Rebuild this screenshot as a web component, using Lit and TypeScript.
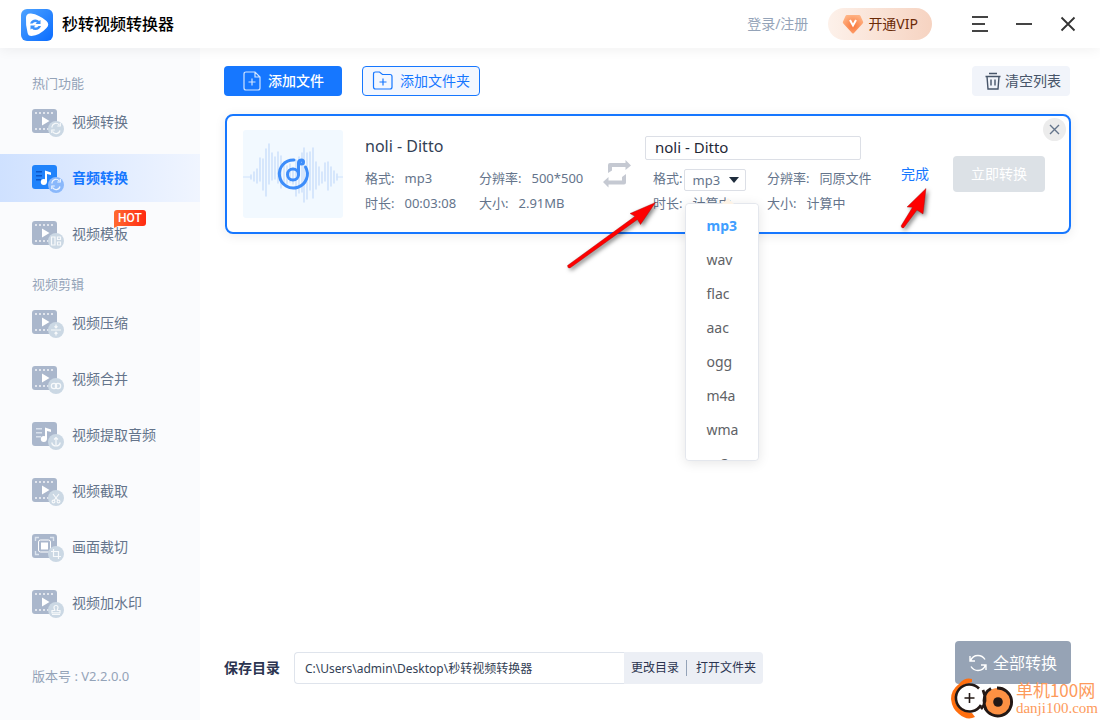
import { LitElement, html, css, svg, nothing, TemplateResult } from "lit";
import { customElement, property, state } from "lit/decorators.js";
import { classMap } from "lit/directives/class-map.js";

const base = css`
  :host {
    box-sizing: border-box;
    font-family: "Noto Sans", "Noto Sans CJK SC", sans-serif;
    font-size: 14px;
    line-height: 20px;
  }
  *, *::before, *::after { box-sizing: border-box; }
  button, input, select { font: inherit; margin: 0; padding: 0; border: 0; background: none; color: inherit; outline: none; }
  button { cursor: pointer; white-space: nowrap; }
  a { text-decoration: none; color: inherit; }
  svg { display: block; flex: none; }
`;

type Entry = { label: string; kind: "video" | "audio" | "frame"; mark: string; hot?: boolean };

const GROUPS: { title: string; entries: Entry[] }[] = [
  {
    title: "热门功能",
    entries: [
      { label: "视频转换", kind: "video", mark: "cycle" },
      { label: "音频转换", kind: "audio", mark: "cycle" },
      { label: "视频模板", kind: "video", mark: "template", hot: true },
    ],
  },
  {
    title: "视频剪辑",
    entries: [
      { label: "视频压缩", kind: "video", mark: "compress" },
      { label: "视频合并", kind: "video", mark: "merge" },
      { label: "视频提取音频", kind: "audio", mark: "extract" },
      { label: "视频截取", kind: "video", mark: "cut" },
      { label: "画面裁切", kind: "frame", mark: "crop" },
      { label: "视频加水印", kind: "video", mark: "stamp" },
    ],
  },
];

const MARKS: Record<string, TemplateResult> = {
  cycle: svg`<path d="M20 20.5v-1a4 4 0 0 1 7.200-1.500M28 23.500a4 4 0 0 1-7.400 1"/><path d="M28.300 16v3h-3M19.800 26v-3h3"/>`,
  template: svg`<path d="M19.500 18h3.500v8h-3.500zM25.500 18h3v2.500h-3zM25.500 23h3v3h-3z"/>`,
  compress: svg`<path d="M19 22h10M24 16.500v3M24 27.500v-3M22.500 18.300l1.500 1.500 1.500-1.500M22.500 25.700l1.500-1.500 1.500 1.500"/>`,
  merge: svg`<circle cx="22" cy="22" r="2.700"/><circle cx="26" cy="22" r="2.700"/>`,
  extract: svg`<path d="M24 25v-7M22 19.500l2-2 2 2M19.700 22.500a4.400 4.400 0 0 0 8.600 0"/>`,
  cut: svg`<path d="M21 18l5 6.500M27 18l-5 6.500"/><circle cx="21.500" cy="25.500" r="1.400"/><circle cx="26.500" cy="25.500" r="1.400"/>`,
  crop: svg`<path d="M21.500 17v7.500h7.500M19 19.500h7.500v7.500"/>`,
  stamp: svg`<path d="M22.800 22.500c0-1.200-.8-1.700-.8-3a2 2 0 0 1 4 0c0 1.300-.8 1.800-.8 3h2.800v2.300h-8v-2.300zM20 26.500h8"/>`,
};

function featureIcon(e: Entry, active: boolean) {
  const dots = [3, 7, 11, 15, 19].map((x) => svg`<rect x=${x} y="5" width="2" height="2"/><rect x=${x} y="21" width="2" height="2"/>`);
  const body =
    e.kind === "video"
      ? svg`<g fill="#fff" opacity=".65">${dots}</g><path d="M10 9.500v9l7.500-4.500z" fill="#fff"/>`
      : e.kind === "audio"
        ? svg`<g fill=${active ? "#0a55c9" : "#d9e1ec"}><rect x="4" y="8" width="6" height="1.500"/><rect x="4" y="12" width="6" height="1.500"/><rect x="4" y="16" width="5" height="1.500"/></g>
            <path d="M13 7.500l6 2v2.500l-4-1v8.500h-2z" fill="#fff"/><circle cx="11.800" cy="19" r="3" fill="#fff"/>`
        : svg`<rect x="6.500" y="8" width="12" height="12" rx="2" fill="none" stroke="#fff"/><rect x="9" y="10.500" width="7" height="7" fill="#fff"/>
            <path d="M3.500 9V5.500H7M18 5.500h3.500V9M3.500 19v3.500H7" fill="none" stroke="#dce4ee" stroke-width="1.400"/>`;
  return html`<svg width="32" height="30" viewBox="0 0 32 30" aria-hidden="true">
    <rect x="0" y="2" width="25" height="24" rx="3" fill=${active ? "#2083fb" : "#aab7cc"} />
    ${body}
    <circle cx="24" cy="22" r="8" fill=${active ? "#8ab8fb" : "#cbd8e4"} />
    <g fill="none" stroke="#fff" stroke-width="1.200" opacity=".85">${MARKS[e.mark]}</g>
  </svg>`;
}

@customElement("side-nav")
class SideNav extends LitElement {
  @property({ type: String }) current = "音频转换";
  static styles = [base, css`
    :host { display: flex; flex-direction: column; background: #fafbfd; padding: 21px 0 34px; }
    h2 { margin: 0 0 1px; padding-left: 32px; font-size: 13px; font-weight: 400; line-height: 28px; color: #94a3b8; }
    ul { list-style: none; margin: 0 0 12px; padding: 0; display: flex; flex-direction: column; gap: 8px; }
    .item { display: flex; align-items: center; gap: 8px; height: 48px; padding-left: 32px; color: #64748b; }
    .item.active { color: #1677ff; font-weight: 700; background: linear-gradient(90deg, #cfe1ff, #f0f5ff); }
    .label { position: relative; }
    .hot { position: absolute; left: 42px; top: -14px; width: 32px; height: 16px; border-radius: 3px 3px 3px 0; background: linear-gradient(90deg, #ff6a30, #ff2a10); color: #fff; font: 500 12px/16px Roboto, sans-serif; text-align: center; }
    .hot::after { content: ""; position: absolute; left: 0; top: 100%; border-top: 2px solid #ff6a30; border-right: 4px solid transparent; }
    .version { margin-top: auto; padding-left: 32px; font-size: 13px; color: #94a3b8; }
  `];
  render() {
    return html`
      ${GROUPS.map((g) => html`
        <h2>${g.title}</h2>
        <ul>
          ${g.entries.map((e) => {
            const active = e.label === this.current;
            return html`<li><a href="#" class=${classMap({ item: true, active })} @click=${(ev: Event) => { ev.preventDefault(); this.current = e.label; }}>
              ${featureIcon(e, active)}
              <span class="label">${e.label}${e.hot ? html`<span class="hot">HOT</span>` : nothing}</span>
            </a></li>`;
          })}
        </ul>`)}
      <div class="version">版本号 : V2.2.0.0</div>
    `;
  }
}

@customElement("title-bar")
class TitleBar extends LitElement {
  static styles = [base, css`
    :host { display: flex; align-items: center; height: 48px; padding: 0 20px; background: #fff; box-shadow: 0 2px 12px rgba(0, 0, 0, .06); position: relative; z-index: 1; }
    h1 { margin: 0 auto 0 8px; font-size: 16px; line-height: 24px; font-weight: 500; color: #000; }
    .login { color: #94a3b8; margin-right: 20px; }
    .vip { display: flex; align-items: center; gap: 4px; height: 32px; padding: 0 14px; border-radius: 16px; background: linear-gradient(90deg, #fdf1ea, #f6d3c1); color: #6b2a06; margin-right: 36px; }
    .windows { display: flex; gap: 20px; }
    .windows button { width: 24px; height: 24px; }
  `];
  render() {
    return html`
      <svg width="34" height="34" viewBox="0 0 34 34" aria-hidden="true">
        <defs><linearGradient id="lg" x1="0" y1="0" x2="1" y2="1"><stop offset="0" stop-color="#4ea3ff" /><stop offset="1" stop-color="#0a6cff" /></linearGradient></defs>
        <rect x="1" y="2" width="32" height="32" rx="6" fill="url(#lg)" />
        <path d="M6 11q0-5 5-4.500 8 1 15.500 7.500 3.500 3.500 0 7-7 7.500-15 8-3.500 0-4-3.500Q5.500 18 6 11z" fill="#fff" />
        <path d="M10 16.500q1.500-4 5.500-4 2.500 0 3.500 1.500l1.500-1v4h-5l1.500-1.500q-2.500-1.500-4.500 1z" fill="#3b92fb" />
        <path d="M21 19q-1.500 4-5.500 4-2.500 0-3.500-1.500l-1.500 1v-4h5L14 20q2.500 1.500 4.500-1z" fill="#3b92fb" />
      </svg>
      <h1>秒转视频转换器</h1>
      <a class="login" href="#">登录/注册</a>
      <button class="vip">
        <svg width="22" height="20" viewBox="0 0 22 20" aria-hidden="true">
          <defs><radialGradient id="vg" cx=".5" cy=".6" r=".6"><stop offset="0" stop-color="#f9783c" /><stop offset="1" stop-color="#ffb283" /></radialGradient></defs>
          <path d="M5 1h12q1 0 1.500 1L21 7.500q.6 1-.3 2L12 19q-1 1-2 0L1.300 9.500q-.9-1-.3-2L3.500 2Q4 1 5 1z" fill="url(#vg)" />
          <path d="M8 6l3 5.500L14 6" fill="none" stroke="#fff" stroke-width="2" />
        </svg>
        开通VIP
      </button>
      <div class="windows">
        <button aria-label="菜单"><svg width="24" height="24" viewBox="0 0 24 24" stroke="#444" stroke-width="2"><path d="M4 5h16M4 12h13M4 19h16" /></svg></button>
        <button aria-label="最小化"><svg width="24" height="24" viewBox="0 0 24 24" stroke="#444" stroke-width="2"><path d="M4 12h16" /></svg></button>
        <button aria-label="关闭"><svg width="24" height="24" viewBox="0 0 24 24" stroke="#333" stroke-width="1.800"><path d="M5.500 5.500l13 13M18.500 5.500l-13 13" /></svg></button>
      </div>
    `;
  }
}

const BARS: [number, number, number][] = [
  [8, 45, 49], [11, 42, 51], [14, 39, 53], [17, 28, 51], [20, 29, 60], [23, 19, 66], [26, 14, 54], [29, 23, 50], [32, 27, 49],
  [35, 22, 53], [38, 26, 58], [41, 32, 54], [44, 36, 54], [47, 34, 52], [50, 38, 54], [53, 30, 66], [56, 27, 63], [59, 23, 62],
  [61, 18, 72], [64, 23, 69], [67, 22, 60], [70, 18, 68], [73, 32, 59], [76, 37, 55], [79, 42, 53], [82, 33, 51], [85, 32, 60],
  [88, 37, 56], [91, 41, 53], [94, 44, 50],
];

@customElement("task-card")
class TaskCard extends LitElement {
  @state() private format = "mp3";
  private formats = ["mp3", "wav", "flac", "aac", "ogg", "m4a", "wma", "ac3"];
  static styles = [base, css`
    :host { display: flex; align-items: flex-start; position: relative; min-height: 120px; padding: 14px 24px 14px 16px; border: 2px solid #1677ff; border-radius: 8px; background: #fff; box-shadow: 0 2px 12px rgba(0, 0, 0, .08); font-size: 13px; color: #64748b; }
    .thumb { border-radius: 3px; background: #f2f9ff; }
    .info { display: grid; grid-template-columns: 114px 1fr; grid-template-rows: 29px 25px 25px; align-items: center; padding-top: 6px; }
    .source { width: 230px; margin: 0 8px 0 22px; }
    .output { flex: 1; margin-left: 14px; }
    .title, .name { grid-column: 1 / -1; align-self: start; }
    .title { font-size: 16px; line-height: 20px; color: #334155; }
    .name { width: 216px; height: 24px; padding: 0 9px 2px; border: 1px solid #dcdfe6; border-radius: 2px; font-size: 15px; color: #1f2937; }
    .pair { display: flex; align-items: center; gap: 10px; white-space: nowrap; }
    .output .pair { padding-left: 8px; }
    .pair.choice { gap: 2px; align-self: start; }
    .picker { position: relative; display: flex; align-items: center; margin-top: 4px; }
    select { appearance: none; width: 62px; height: 22px; padding: 0 7px; border: 1px solid #dcdfe6; border-radius: 2px; background: #fff; }
    .caret { position: absolute; right: 6px; pointer-events: none; }
    .menu { position: absolute; z-index: 2; left: 1px; top: 34px; width: 74px; height: 258px; border: 1px solid #e4e7ed; border-radius: 4px; background: #fff; box-shadow: 0 2px 12px rgba(0, 0, 0, .1); }
    .menu::before { content: ""; position: absolute; left: 36px; top: -6px; border: 6px solid transparent; border-top: 0; border-bottom-color: #fdf3e6; }
    .menu ul { list-style: none; margin: 0; padding: 5px 0 0; height: 100%; overflow: hidden; border-radius: 4px; position: relative; background: #fff; }
    .menu li { height: 34px; line-height: 34px; padding: 0 20px; font-size: 14px; color: #606266; cursor: pointer; }
    .menu li.on { color: #409eff; font-weight: 700; }
    .swap, .done, .go { align-self: center; }
    .done { color: #1677ff; font-size: 14px; margin-right: 24px; }
    .go { width: 92px; height: 36px; border-radius: 4px; background: #dce1e6; color: #fff; font-size: 14px; }
    .close { position: absolute; right: 3px; top: 2px; width: 23px; height: 23px; border-radius: 50%; background: #ececec; display: grid; place-items: center; }
  `];
  render() {
    return html`
      <svg class="thumb" width="100" height="88" viewBox="0 0 100 88" aria-hidden="true">
        <g stroke="#cfe2fc" stroke-width="1.600" stroke-linecap="round">
          <path d="M0 47h8M94 47h6" stroke-width="1" />
          ${BARS.map(([x, a, b]) => svg`<path d=${`M${x} ${a}V${b}`}/>`)}
        </g>
        <g fill="none" stroke="#3d8dfa" stroke-width="3" stroke-linecap="round">
          <path d="M51 30A14 14 0 1 0 62.500 37" />
          <circle cx="50" cy="44.500" r="5.500" />
          <path d="M55.500 44.500V33q0-2.500 2-2.500" />
          <circle cx="58.500" cy="32" r="2" />
        </g>
      </svg>
      <div class="info source">
        <div class="title">noli - Ditto</div>
        <div class="pair"><span>格式:</span><span>mp3</span></div>
        <div class="pair"><span>分辨率:</span><span>500*500</span></div>
        <div class="pair"><span>时长:</span><span>00:03:08</span></div>
        <div class="pair"><span>大小:</span><span>2.91MB</span></div>
      </div>
      <svg class="swap" width="28" height="28" viewBox="0 0 28 28" fill="#c5c9d2" aria-hidden="true">
        <path d="M5 13V5q0-2 2-2h15.500V0l5.500 5.500-5.500 4.500V7H9v3.500z" />
        <path d="M23 14v8.500q0 2-2 2H5.500v3L0 22l5.500-5v3.500H19V17z" />
      </svg>
      <div class="info output">
        <input class="name" aria-label="文件名" .value=${"noli - Ditto"} />
        <div class="pair choice">
          <label for="format">格式:</label>
          <div class="picker">
            <select id="format" .value=${this.format} @change=${(e: Event) => (this.format = (e.target as HTMLSelectElement).value)}>
              ${this.formats.map((f) => html`<option ?selected=${f === this.format}>${f}</option>`)}
            </select>
            <svg class="caret" width="12" height="8" viewBox="0 0 12 8"><path d="M1 1h10L6 7z" fill="#1f2d3d" /></svg>
            <div class="menu">
              <ul role="listbox" aria-label="格式">
                ${this.formats.map((f) => html`<li role="option" aria-selected=${f === this.format} class=${classMap({ on: f === this.format })} @click=${() => (this.format = f)}>${f}</li>`)}
              </ul>
            </div>
          </div>
        </div>
        <div class="pair"><span>分辨率:</span><span>同原文件</span></div>
        <div class="pair"><span>时长:</span><span>计算中</span></div>
        <div class="pair"><span>大小:</span><span>计算中</span></div>
      </div>
      <a class="done" href="#">完成</a>
      <button class="go">立即转换</button>
      <button class="close" aria-label="移除"><svg width="11" height="11" viewBox="0 0 11 11" stroke="#64748b" stroke-width="1.400"><path d="M1 1l9 9M10 1l-9 9" /></svg></button>
    `;
  }
}

@customElement("site-badge")
class SiteBadge extends LitElement {
  static styles = [base, css`
    :host { display: flex; align-items: center; gap: 1px; color: #fd9a5b; }
    .words { display: flex; flex-direction: column; font-family: "Noto Sans CJK SC", sans-serif; white-space: nowrap; }
    .name { font-size: 17px; line-height: 18px; font-weight: 400; }
    .host { font: 15px/18px "Liberation Serif", serif; }
  `];
  render() {
    return html`
      <svg width="64" height="42" viewBox="0 0 64 42" aria-hidden="true">
        <path d="M21 1Q14-1 8 6 0 12 0 21q1 10 8 15 8 7 16 3l-3-4Q4 33 4 20 5 8 21 4z" fill="#ff6f0f" />
        <circle cx="18.500" cy="20" r="14" fill="#fff" />
        <path d="M28 10.500A13.500 13.500 0 1 0 30 27" fill="none" stroke="#231815" stroke-width="2.600" />
        <path d="M13.500 20h10M18.500 15v10" stroke="#231815" stroke-width="1.600" />
        <circle cx="47" cy="24" r="14" fill="#fd9143" />
        <path d="M46 10a14 14 0 1 1-12 20" fill="none" stroke="#231815" stroke-width="2.800" />
        <path d="M32 12q5 12-2 19M40 10.500q-7 4-7 12 0 5 2 9" fill="none" stroke="#231815" stroke-width="2.800" />
        <circle cx="47" cy="24" r="4.800" fill="#231815" />
      </svg>
      <div class="words"><span class="name">单机100网</span><span class="host">danji100.com</span></div>
    `;
  }
}

@customElement("app-root")
class AppRoot extends LitElement {
  static styles = [base, css`
    :host { display: grid; grid-template: auto 1fr / 200px 1fr; min-height: 100vh; position: relative; background: #fff; overflow: hidden; }
    title-bar { grid-column: 1 / -1; }
    main { display: flex; flex-direction: column; min-width: 0; padding: 18px 29px 36px 24px; }
    .toolbar { display: flex; gap: 20px; padding-right: 1px; }
    .tool { display: flex; align-items: center; justify-content: center; gap: 6px; width: 118px; height: 30px; border-radius: 4px; }
    .primary { background: #1677ff; color: #fff; font-weight: 500; }
    .outline { border: 1px solid #1677ff; background: #f3f7ff; color: #1677ff; }
    .clear { margin-left: auto; width: 98px; gap: 3px; padding-left: 3px; background: #f1f4fa; color: #475569; }
    .list { flex: 1; padding: 18px 0 0 1px; }
    .save { display: flex; align-items: flex-end; color: #2b3450; }
    .save label { font-weight: 700; line-height: 32px; margin-right: 14px; }
    .path { width: 330px; height: 32px; padding: 0 10px; border: 1px solid #dfe4ec; border-right: 0; border-radius: 4px 0 0 4px; font-size: 12px; color: #334155; }
    .folder { display: flex; align-items: center; height: 32px; background: #eceff5; border-radius: 0 4px 4px 0; font-size: 12px; }
    .folder button { height: 16px; line-height: 16px; padding: 0 7px; }
    .folder button + button { border-left: 1px solid #94a3b8; padding-left: 9px; }
    .all { display: flex; align-items: center; justify-content: center; gap: 6px; margin-left: auto; width: 116px; height: 43px; border-radius: 4px; background: #96a3b5; color: #fff; font-size: 16px; }
    .arrows { position: absolute; left: 0; top: 0; pointer-events: none; z-index: 3; filter: drop-shadow(2px 2px 2px rgba(0, 0, 0, .5)); }
    site-badge { position: absolute; right: 2px; bottom: 0; z-index: 3; }
  `];
  render() {
    return html`
      <title-bar></title-bar>
      <side-nav></side-nav>
      <main>
        <div class="toolbar">
          <button class="tool primary">
            <svg width="20" height="20" viewBox="0 0 20 20" fill="none" stroke="#fff" stroke-opacity=".8" stroke-width="1.200" aria-hidden="true"><path d="M13 1H4Q2 1 2 3v14q0 2 2 2h12q2 0 2-2V6zM13 1v5h5M10 7.500v7M6.500 11h7" /></svg>添加文件
          </button>
          <button class="tool outline">
            <svg width="22" height="20" viewBox="0 0 22 20" fill="none" stroke="#1677ff" stroke-width="1.200" aria-hidden="true"><path d="M1.500 3q0-2 2-2h4l3 2.500H18q2 0 2 2V16q0 2-2 2H3.500q-2 0-2-2zM11 7.500v7M7.500 11h7" /></svg>添加文件夹
          </button>
          <button class="tool clear">
            <svg width="18" height="18" viewBox="0 0 18 18" fill="none" stroke="#475569" stroke-width="1.400" aria-hidden="true"><path d="M5 1.500h8M1.500 4.500h15M3 4.500L4 17h10l1-12.500M7 7.500v6M11 7.500v6" /></svg>清空列表
          </button>
        </div>
        <div class="list"><task-card></task-card></div>
        <div class="save">
          <label for="dir">保存目录</label>
          <input class="path" id="dir" readonly .value=${"C:\\Users\\admin\\Desktop\\秒转视频转换器"} />
          <div class="folder"><button>更改目录</button><button>打开文件夹</button></div>
          <button class="all">
            <svg width="18" height="18" viewBox="0 0 18 18" fill="none" stroke="#fff" stroke-width="1.400" aria-hidden="true"><path d="M1.500 7Q3.500 1.500 9 1.500q4.500 0 7 4M16.500 11Q14.500 16.500 9 16.500q-4.500 0-7-4M1 2v5h5M17 16v-5h-5" /></svg>全部转换
          </button>
        </div>
      </main>
      <svg class="arrows" width="940" height="280" viewBox="0 0 940 280" fill="#fe0000" stroke="#a00a0a" stroke-width=".4" aria-hidden="true">
        <path d="M655.500 202.500L630 213.500l5 2.800L567.500 265.500q0 3 2.500 2.500L637.500 219.500l3 5z" />
        <path d="M926 188.500L907 207l5.500.3L901 226q1 3 3 1.500L917 210l6 4z" />
      </svg>
      <site-badge></site-badge>
    `;
  }
}
